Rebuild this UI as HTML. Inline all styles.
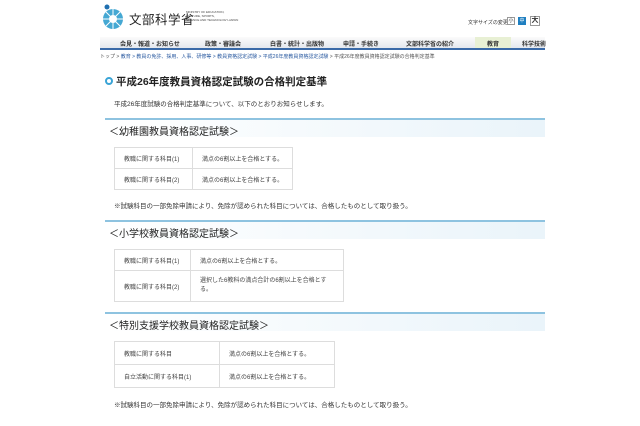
<!DOCTYPE html>
<html><head><meta charset="utf-8"><style>
*{margin:0;padding:0;box-sizing:border-box}
body{width:640px;height:426px;background:#fff;position:relative;overflow:hidden;font-family:"Liberation Sans","Noto Sans CJK JP",sans-serif;color:#333}
.a{position:absolute;white-space:nowrap}
.s{font-size:5px}
.t{font-size:6.5px}
.nav{position:absolute;left:100px;top:37px;width:445px;height:13px;background:linear-gradient(#fbfbfb,#e4e8ee);border-bottom:2px solid #3a6aa8}
.nav span{position:absolute;top:2px;font-size:6px;font-weight:bold;color:#333;white-space:nowrap}
.sec{position:absolute;left:105px;width:440px;height:19px;border-top:2px solid #8ec3e0;background:linear-gradient(90deg,#fff 0%,#eaf4fa 100%);font-size:10px;padding:3px 0 0 4px;color:#222;white-space:nowrap}
table{position:absolute;border-collapse:collapse;font-size:6px;color:#444}
td{border:1px solid #ddd;padding:0 0 0 9px;vertical-align:middle}
</style></head><body>
<svg class="a" style="left:100px;top:4px" width="26" height="26" viewBox="0 0 26 26"><circle cx="7" cy="3" r="2.5" fill="#1f6fb0"/><circle cx="13" cy="15" r="10" fill="#45a8d3"/><circle cx="13" cy="15" r="4" fill="#fff"/><g stroke="#fff" stroke-width="1"><line x1="13" y1="5" x2="13" y2="25"/><line x1="3" y1="15" x2="23" y2="15"/><line x1="6" y1="8" x2="20" y2="22"/><line x1="20" y1="8" x2="6" y2="22"/></g></svg>
<div class="a" style="left:129px;top:9px;font-size:12.5px;color:#222;letter-spacing:0.5px">文部科学省</div>
<div class="a" style="left:186px;top:10px;font-size:3px;line-height:4px;color:#444">MINISTRY OF EDUCATION,<br>CULTURE, SPORTS,<br>SCIENCE AND TECHNOLOGY-JAPAN</div>
<div class="a s" style="left:468px;top:19px">文字サイズの変更</div>
<div class="a" style="left:507px;top:17px;width:8px;height:8px;border:1px solid #999;font-size:5px;text-align:center;line-height:6px">小</div>
<div class="a" style="left:518px;top:17px;width:8px;height:8px;background:#1f7fc0;color:#fff;font-size:5px;text-align:center;line-height:8px">中</div>
<div class="a" style="left:530px;top:16px;width:10px;height:10px;border:1px solid #999;font-size:7px;text-align:center;line-height:8px;font-weight:bold">大</div>
<div class="nav">
<span style="left:20px">会見・報道・お知らせ</span>
<span style="left:105px">政策・審議会</span>
<span style="left:170px">白書・統計・出版物</span>
<span style="left:243px">申請・手続き</span>
<span style="left:306px">文部科学省の紹介</span>
<div style="position:absolute;left:375px;top:0;width:36px;height:11px;background:#e8f0d4"></div>
<span style="left:387px">教育</span>
<span style="left:422px">科学技術</span>
</div>
<div class="a" style="left:100px;top:53px;font-size:5px;color:#555">トップ &gt; <span style="color:#2a5aa0">教育 &gt; 教員の免許、採用、人事、研修等 &gt; 教員資格認定試験 &gt; 平成26年度教員資格認定試験</span> &gt; 平成26年度教員資格認定試験の合格判定基準</div>
<div class="a" style="left:105px;top:77px;width:8px;height:8px;border-radius:50%;background:#fff;border:2.5px solid #3aa4d6"></div>
<div class="a" style="left:116px;top:74px;font-size:10.5px;font-weight:bold;color:#222">平成26年度教員資格認定試験の合格判定基準</div>
<div class="a t" style="left:114px;top:98px">平成26年度試験の合格判定基準について、以下のとおりお知らせします。</div>

<div class="sec" style="top:118px">＜幼稚園教員資格認定試験＞</div>
<table style="left:114px;top:147px;width:179px"><tr style="height:21px"><td style="width:78px">教職に関する科目(1)</td><td>満点の6割以上を合格とする。</td></tr><tr style="height:21px"><td>教職に関する科目(2)</td><td>満点の6割以上を合格とする。</td></tr></table>
<div class="a t" style="left:114px;top:200px">※試験科目の一部免除申請により、免除が認められた科目については、合格したものとして取り扱う。</div>

<div class="sec" style="top:220px">＜小学校教員資格認定試験＞</div>
<table style="left:114px;top:249px;width:230px"><tr style="height:21px"><td style="width:76px">教職に関する科目(1)</td><td>満点の6割以上を合格とする。</td></tr><tr style="height:31px"><td>教職に関する科目(2)</td><td style="line-height:9px">選択した6教科の満点合計の6割以上を合格とす<br>る。</td></tr></table>

<div class="sec" style="top:312px">＜特別支援学校教員資格認定試験＞</div>
<table style="left:114px;top:341px;width:221px"><tr style="height:23px"><td style="width:105px">教職に関する科目</td><td>満点の6割以上を合格とする。</td></tr><tr style="height:23px"><td>自立活動に関する科目(1)</td><td>満点の6割以上を合格とする。</td></tr></table>
<div class="a t" style="left:114px;top:399px">※試験科目の一部免除申請により、免除が認められた科目については、合格したものとして取り扱う。</div>
</body></html>
